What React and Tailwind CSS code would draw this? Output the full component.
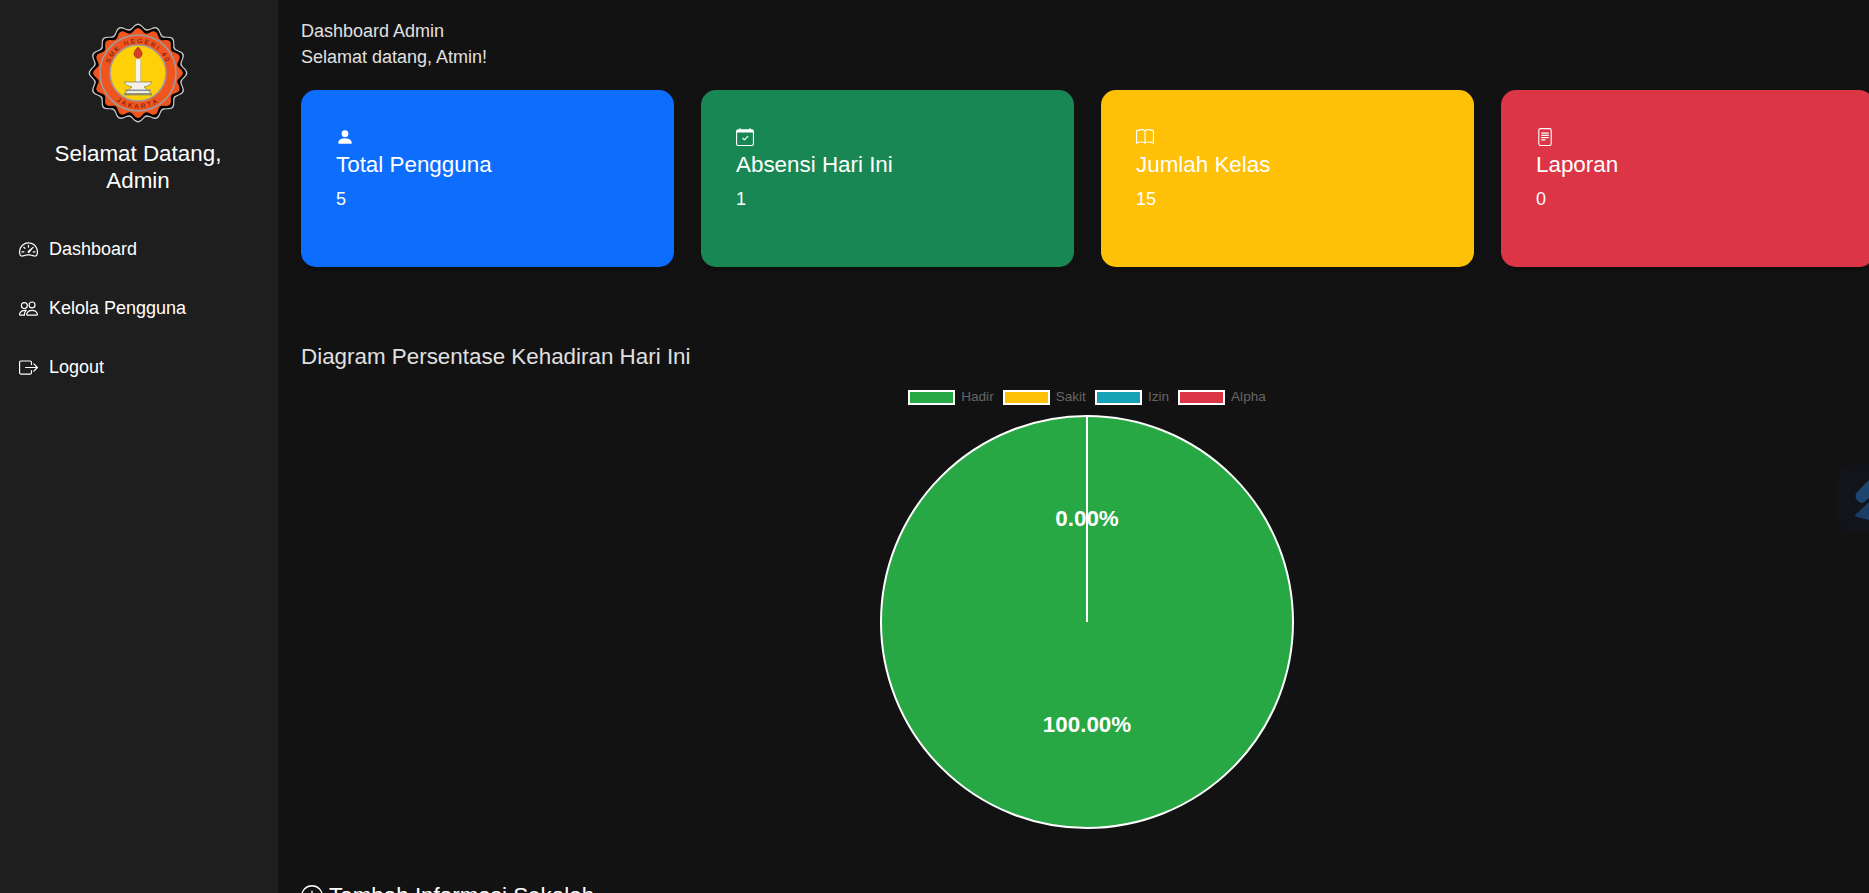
import { BsSpeedometer2, BsPeople, BsBoxArrowRight, BsPersonFill, BsCalendarCheck, BsBook, BsFileText, BsPlusCircle } from 'react-icons/bs'

const navItems = [
  { label: 'Dashboard', icon: BsSpeedometer2 },
  { label: 'Kelola Pengguna', icon: BsPeople },
  { label: 'Logout', icon: BsBoxArrowRight },
]

const cards = [
  { title: 'Total Pengguna', value: '5', icon: BsPersonFill, color: 'bg-[#0d6efd]' },
  { title: 'Absensi Hari Ini', value: '1', icon: BsCalendarCheck, color: 'bg-[#198754]' },
  { title: 'Jumlah Kelas', value: '15', icon: BsBook, color: 'bg-[#ffc107]' },
  { title: 'Laporan', value: '0', icon: BsFileText, color: 'bg-[#dc3545]' },
]

const legend = [
  { label: 'Hadir', color: 'bg-[#28a745]' },
  { label: 'Sakit', color: 'bg-[#ffc107]' },
  { label: 'Izin', color: 'bg-[#17a2b8]' },
  { label: 'Alpha', color: 'bg-[#dc3545]' },
]

// wavy edge of the school seal
function scallop(cx, cy, r, amp, waves) {
  let d = ''
  for (let i = 0; i <= 180; i++) {
    const a = (i / 180) * Math.PI * 2
    const rr = r + amp * Math.cos(a * waves)
    const x = cx + rr * Math.sin(a)
    const y = cy - rr * Math.cos(a)
    d += `${i ? 'L' : 'M'}${x.toFixed(2)} ${y.toFixed(2)}`
  }
  return d + 'Z'
}

function Logo() {
  return (
    <svg width="100" height="100" viewBox="0 0 100 100">
      <path d={scallop(50, 50, 47, 2.4, 16)} fill="#c9c9c9" />
      <path d={scallop(50, 50, 45.5, 2.4, 16)} fill="#000" />
      <path d={scallop(50, 50, 42.5, 2.4, 16)} fill="#f1551f" />
      <circle cx="50" cy="50" r="38" fill="#f1551f" stroke="#a09a9a" strokeWidth="1.6" />
      <circle cx="50" cy="50" r="28" fill="#ffd006" stroke="#a09a9a" strokeWidth="1.6" />
      <defs>
        <path id="sealTop" d="M21 57.8 A30 30 0 1 1 79 57.8" />
        <path id="sealBottom" d="M14.5 50 A35.5 35.5 0 0 0 85.5 50" />
      </defs>
      <text fontFamily="'Liberation Sans', sans-serif" fontSize="6.5" fill="#5a120c" letterSpacing="1.9">
        <textPath href="#sealTop" startOffset="50%" textAnchor="middle">SMK NEGERI 40</textPath>
      </text>
      <text fontFamily="'Liberation Sans', sans-serif" fontSize="6.5" fill="#5a120c" letterSpacing="2.6">
        <textPath href="#sealBottom" startOffset="50%" textAnchor="middle">JAKARTA</textPath>
      </text>
      <path d="M50 24c3 3 4 5 4 7s-2 4-4 4-4-2-4-4 1-4 4-7z" fill="#d8402a" stroke="#8a1f14" strokeWidth="0.6" />
      <rect x="47.4" y="36" width="5.2" height="23" fill="#f5f5f0" stroke="#999" strokeWidth="0.4" />
      <path d="M36 59h28c-1 3-5 4-8 5l8 7H36l8-7c-3-1-7-2-8-5z" fill="#f2f2ea" stroke="#555" strokeWidth="0.5" />
      <rect x="37" y="66.5" width="26" height="1.6" fill="#8f8f8f" />
      <rect x="36" y="70" width="28" height="2.4" fill="#8f8f6a" />
    </svg>
  )
}

function PieChart() {
  const cx = 208
  const cy = 208
  const r = 206
  return (
    <svg width="416" height="416" viewBox="0 0 416 416">
      <circle cx={cx} cy={cy} r={r} fill="#28a745" stroke="#fff" strokeWidth="2" />
      <line x1={cx} y1={cy} x2={cx} y2={cy - r} stroke="#fff" strokeWidth="2" />
      <g fontFamily="'Liberation Sans', sans-serif" fontSize="22.4" fontWeight="700" fill="#fff" textAnchor="middle">
        <text x={cx} y={cy - 96}>0.00%</text>
        <text x={cx} y={cy + 110}>100.00%</text>
      </g>
    </svg>
  )
}

export default function App() {
  return (
    <div className="relative flex h-screen overflow-hidden bg-[#121212] font-['Liberation_Sans',Arial,sans-serif] text-white">
      <aside className="flex w-[278px] shrink-0 flex-col bg-[#1e1e1e]">
        <div className="flex justify-center pt-[23px] pr-[2px]">
          <Logo />
        </div>
        <h2 className="mt-[17px] pr-[42px] pl-[40px] text-center text-[22.4px] leading-[27px] font-normal">Selamat Datang, Admin</h2>
        <nav className="mt-[26px] flex flex-col">
          {navItems.map((item) => (
            <a key={item.label} href="#" className="flex h-[59px] items-center gap-[11px] pl-[19px] text-[18px]">
              <item.icon className="text-[19px]" />
              <span>{item.label}</span>
            </a>
          ))}
        </nav>
      </aside>

      <main className="min-w-0 flex-1 pt-[18px] pl-[23px]">
        <p className="text-[18px] leading-[26px] text-[#e0e0e0]">Dashboard Admin</p>
        <p className="text-[18px] leading-[26px] text-[#e0e0e0]">Selamat datang, Atmin!</p>

        <div className="mt-[20px] flex gap-[27px]">
          {cards.map((card) => (
            <div key={card.title} className={`h-[177px] w-[373px] shrink-0 rounded-[15px] px-[35px] pt-[38px] shadow-lg ${card.color}`}>
              <card.icon className="text-[18px]" />
              <h3 className="mt-[5px] text-[22.4px] leading-[27px] font-normal">{card.title}</h3>
              <p className="mt-[8px] text-[18px] leading-[27px]">{card.value}</p>
            </div>
          ))}
        </div>

        <h2 className="mt-[76px] text-[22.4px] leading-[27px] font-normal text-[#e0e0e0]">Diagram Persentase Kehadiran Hari Ini</h2>

        <div className="w-[1572px]">
          <div className="mt-[19px] flex justify-center gap-[9px] text-[13.6px] leading-[16px] text-[#666]">
            {legend.map((item) => (
              <div key={item.label} className="flex items-center gap-[6px]">
                <span className={`h-[15px] w-[47px] border-2 border-white ${item.color}`} />
                <span>{item.label}</span>
              </div>
            ))}
          </div>
          <div className="mt-[9px] flex justify-center">
            <PieChart />
          </div>
        </div>

        <h3 className="mt-[52px] flex items-center gap-[6px] text-[22.4px] leading-[27px] font-normal">
          <BsPlusCircle className="text-[22px]" />
          Tambah Informasi Sekolah
        </h3>
      </main>

      {/* floating widget peeking in from the right edge */}
      <div className="absolute top-[465px] left-[1838px] h-[68px] w-[68px] rounded-[14px] bg-[#121419] pt-[15px] pl-[16px]">
        <svg width="15" height="40" viewBox="0 0 15 40">
          <path d="M15 0 3 12q-3 4 0 8t6 3l6-5z" fill="#1c4670" />
          <path d="M15 22 0 36l15 4z" fill="#1a3d68" />
        </svg>
      </div>
    </div>
  )
}
